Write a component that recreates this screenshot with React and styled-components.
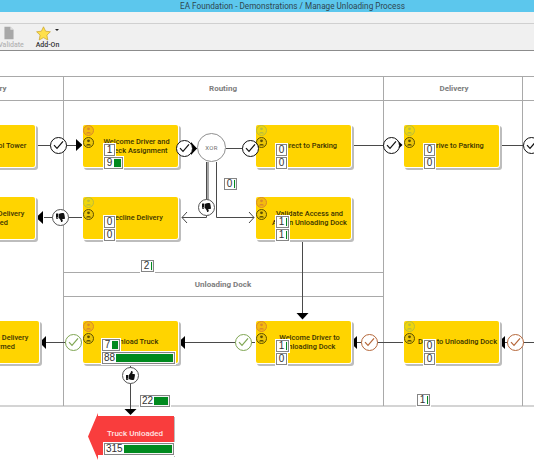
import styled, { createGlobalStyle } from "styled-components";
import { FaThumbsDown, FaThumbsUp } from "react-icons/fa";

const GlobalStyle = createGlobalStyle`
  html, body {
    margin: 0;
    padding: 0;
    background: #fff;
  }
  body {
    font-family: Roboto, "Liberation Sans", sans-serif;
    overflow: hidden;
  }
`;

const Page = styled.div`
  width: 534px;
  height: 462px;
  display: flex;
  flex-direction: column;
  overflow: hidden;
  background: #fff;
`;

const TitleBar = styled.div`
  height: 12px;
  flex: none;
  display: flex;
  align-items: center;
  padding-left: 180px;
  background: #5cc7ed;
  color: #2f4650;
  font-size: 8.2px;
  line-height: 12px;
  white-space: nowrap;
`;

const MenuBand = styled.div`
  height: 11px;
  flex: none;
  background: #f2f2f2;
  border-bottom: 1px solid #d0d0d0;
`;

const Toolbar = styled.div`
  height: 24px;
  flex: none;
  display: flex;
  gap: 14px;
  padding-top: 2px;
  background: #f0f0f0;
  border-bottom: 1px solid #8c8c8c;
`;

const ToolButton = styled.div`
  width: ${(p) => p.$width}px;
  display: flex;
  flex-direction: column;
  align-items: center;
  font-size: 7px;
  font-weight: 500;
  line-height: 9px;
  color: ${(p) => (p.$disabled ? "#b5b5b5" : "#333")};
  white-space: nowrap;
`;

const ToolIcon = styled.div`
  height: 15px;
  align-self: flex-start;
  margin-left: ${(p) => p.$offset}px;
  position: relative;
  display: flex;
`;

const Caret = styled.span`
  position: absolute;
  left: 19px;
  top: 3px;
  width: 0;
  height: 0;
  border-left: 2px solid transparent;
  border-right: 2px solid transparent;
  border-top: 2px solid #222;
`;

const Canvas = styled.div`
  position: relative;
  flex: 1;
  overflow: hidden;
`;

const Wires = styled.svg`
  position: absolute;
  left: 0;
  top: -51px;
`;

const LaneTitle = styled.div`
  position: absolute;
  left: ${(p) => p.$x - 60}px;
  top: ${(p) => p.$y - 51 - 6}px;
  width: 120px;
  text-align: center;
  font-size: 8px;
  line-height: 12px;
  font-weight: 700;
  color: #7d7d7d;
`;

const Task = styled.div`
  position: absolute;
  left: ${(p) => p.$x}px;
  top: ${(p) => p.$y - 51}px;
  width: 95px;
  height: 42px;
  box-sizing: border-box;
  padding-left: 12px;
  display: flex;
  align-items: center;
  justify-content: center;
  text-align: center;
  white-space: pre-line;
  background: #ffd400;
  border-radius: 2px;
  box-shadow: 0 0 0 1px #fff, 2px 2px 0 1px #bdbdbd;
  color: #3b3300;
  font-size: 7.4px;
  font-weight: 500;
  line-height: 9.5px;
`;

const Badge = styled.span`
  position: absolute;
  left: 0;
  top: ${(p) => p.$top}px;
  width: 11px;
  height: 11px;
  box-sizing: border-box;
  border-radius: 50%;
  display: flex;
  align-items: center;
  justify-content: center;
  background: ${(p) => p.$bg};
  border: 1px solid ${(p) => p.$line};
  color: ${(p) => p.$line};
`;

const CounterStack = styled.div`
  position: absolute;
  left: ${(p) => p.$left}px;
  top: ${(p) => p.$top}px;
  display: flex;
  flex-direction: column;
  align-items: flex-start;
  gap: 1px;
`;

const FreeCounter = styled.div`
  position: absolute;
  left: ${(p) => p.$x}px;
  top: ${(p) => p.$y - 51}px;
`;

const CounterRow = styled.div`
  display: flex;
  height: 10px;
  box-shadow: 0 0 0 1px #fff;
  background: #f4f4f4;
  border: 1px solid #858585;
  box-sizing: content-box;
`;

const CounterValue = styled.span`
  min-width: 9px;
  padding: 0 1px;
  box-sizing: border-box;
  text-align: center;
  background: #fff;
  color: #333;
  font-family: "Liberation Sans", sans-serif;
  font-size: 10px;
  font-weight: 400;
  line-height: 10px;
`;

const CounterBar = styled.span`
  display: block;
  width: ${(p) => p.$fill}px;
  height: 8px;
  margin: 1px 1px 1px 0;
  background: #008a1e;
`;

const Gate = styled.div`
  position: absolute;
  left: ${(p) => p.$x - 8.5}px;
  top: ${(p) => p.$y - 51 - 8.5}px;
  width: 17px;
  height: 17px;
  box-sizing: border-box;
  border-radius: 50%;
  background: #fff;
  border: ${(p) => (p.$thin ? 1 : 1.5)}px solid ${(p) => p.$color};
  color: ${(p) => (p.$tint ? p.$color : "#111")};
  display: flex;
  align-items: center;
  justify-content: center;
`;

const Xor = styled.div`
  position: absolute;
  left: 197px;
  top: 82px;
  width: 29px;
  height: 29px;
  box-sizing: border-box;
  border-radius: 50%;
  border: 1px solid #8f8f8f;
  background: #fff;
  display: flex;
  align-items: center;
  justify-content: center;
  color: #6f6f6f;
  font-size: 6px;
  letter-spacing: 0.3px;
`;

const EndEvent = styled.div`
  position: absolute;
  left: 88px;
  top: 362px;
  width: 86px;
  height: 47px;
  display: flex;
  justify-content: center;
  padding-left: 8px;
  box-sizing: border-box;
  background: #f93d3d;
  clip-path: polygon(0 50%, 10px 0, 10px 3px, 86px 3px, 86px 42px, 10px 42px, 10px 47px);
  color: #ffe3e3;
  font-size: 8px;
  font-weight: 500;
  line-height: 12px;
  padding-top: 15px;
`;

const EndShadow = styled.div`
  position: absolute;
  left: 174px;
  top: 366px;
  width: 1px;
  height: 40px;
  background: #bdbdbd;
`;

const Check = () => (
  <svg width="11" height="10" viewBox="0 0 11 10" fill="none">
    <path d="M1 5.2 L4 8.4 L10 1.4" stroke="currentColor" strokeWidth="1.2" />
  </svg>
);

const Person = () => (
  <svg width="7" height="7" viewBox="0 0 7 7" fill="currentColor">
    <circle cx="3.5" cy="1.8" r="1.4" />
    <path d="M1 6.5 C1 4.4 6 4.4 6 6.5 Z" />
  </svg>
);

const Counter = ({ value, fill = 0 }) => (
  <CounterRow>
    <CounterValue>{value}</CounterValue>
    {fill > 0 && <CounterBar $fill={fill} />}
  </CounterRow>
);

const DIM = { bg: "#efd60c", line: "#bcbc3c" };
const WARM = { bg: "#f4bb0c", line: "#d98a2c" };
const DARK = { bg: "#ecc608", line: "#5e5000" };

const tasks = [
  { x: -60, y: 125, text: "Go to Control Tower" },
  {
    x: 83,
    y: 125,
    text: "Welcome Driver and\nCheck Assignment",
    badges: [WARM, DARK],
    top: 19,
    left: 21,
    rows: [{ value: 1 }, { value: 9, fill: 7 }],
  },
  {
    x: 256,
    y: 125,
    text: "Direct to Parking",
    badges: [DIM, DARK],
    top: 19,
    left: 20,
    rows: [{ value: 0 }, { value: 0 }],
  },
  {
    x: 404,
    y: 125,
    text: "Drive to Parking",
    badges: [DIM, DARK],
    top: 19,
    left: 20,
    rows: [{ value: 0 }, { value: 0 }],
  },
  { x: -60, y: 197, text: "Announce Delivery\nDeclined" },
  {
    x: 83,
    y: 197,
    text: "Decline Delivery",
    badges: [DIM, DARK],
    top: 19,
    left: 21,
    rows: [{ value: 0 }, { value: 0 }],
  },
  {
    x: 256,
    y: 197,
    text: "Validate Access and\nAdd in Unloading Dock",
    badges: [WARM, DARK],
    top: 19,
    left: 20,
    rows: [
      { value: 1, fill: 1 },
      { value: 1, fill: 1 },
    ],
  },
  { x: -56, y: 321, text: "Announce Delivery\nConfirmed" },
  {
    x: 83,
    y: 321,
    text: "Unload Truck",
    badges: [WARM, DARK],
    top: 18,
    left: 19,
    rows: [
      { value: 7, fill: 6 },
      { value: 88, fill: 57 },
    ],
  },
  {
    x: 256,
    y: 321,
    text: "Welcome Driver to\nUnloading Dock",
    badges: [WARM, DARK],
    top: 19,
    left: 20,
    rows: [{ value: 1, fill: 1 }, { value: 0 }],
  },
  {
    x: 404,
    y: 321,
    text: "Drive to Unloading Dock",
    badges: [DIM, DARK],
    top: 19,
    left: 20,
    rows: [{ value: 0 }, { value: 0 }],
  },
];

const checks = [
  { x: 58, y: 145, color: "#111" },
  { x: 184, y: 148, color: "#111" },
  { x: 250, y: 148, color: "#111" },
  { x: 391, y: 145, color: "#111" },
  { x: 531, y: 145, color: "#111" },
  { x: 73, y: 342, color: "#7fa653", thin: true },
  { x: 243, y: 342, color: "#7fa653", thin: true },
  { x: 369, y: 342, color: "#b5673a", thin: true },
  { x: 515, y: 342, color: "#b5673a", thin: true },
];

const freeCounters = [
  { x: 224, y: 178, value: 0, fill: 1 },
  { x: 141, y: 260, value: 2, fill: 1 },
  { x: 140, y: 395, value: 22, fill: 14 },
  { x: 417, y: 394, value: 1, fill: 1 },
];

const App = () => (
  <Page>
    <GlobalStyle />
    <TitleBar>EA Foundation - Demonstrations / Manage Unloading Process</TitleBar>
    <MenuBand />
    <Toolbar>
      <ToolButton $width={22} $disabled>
        <ToolIcon $offset={4}>
          <svg width="10" height="14" viewBox="0 0 11 15">
            <path d="M0.5 0.5 H7 L10.5 4 V14.5 H0.5 Z" fill="#a8a8a8" />
            <path d="M7 0.5 V4 H10.5 Z" fill="#e0e0e0" />
          </svg>
        </ToolIcon>
        Validate
      </ToolButton>
      <ToolButton $width={23}>
        <ToolIcon $offset={0}>
          <svg width="15" height="15" viewBox="0 0 15 15">
            <path
              d="M7.5 0.8 L9.6 5.2 L14.4 5.8 L10.9 9.1 L11.8 14 L7.5 11.6 L3.2 14 L4.1 9.1 L0.6 5.8 L5.4 5.2 Z"
              fill="#ffe04a"
              stroke="#c9a227"
              strokeWidth="0.7"
            />
          </svg>
          <Caret />
        </ToolIcon>
        Add-On
      </ToolButton>
    </Toolbar>
    <Canvas>
      <Wires width="534" height="462" viewBox="0 0 534 462" fill="none">
        <g stroke="#a9a9a9" strokeWidth="1">
          <path d="M0 76.5 H534 M0 100.5 H534 M0 406 H534" />
          <path d="M63.5 76 V406 M383.5 76 V406 M522.5 76 V406" />
          <path d="M63 272.5 H383 M63 296.5 H383" />
        </g>
        <g stroke="#4a4a4a" strokeWidth="1">
          <path d="M36 145.5 H76 M178 148.5 H197 M226 148.5 H256 M352 145.5 H396 M499 145.5 H534" />
          <path d="M83 217.5 H44" />
          <path d="M206.5 162 V217.5 H182 M208 162 V216" />
          <path d="M216.5 162 V217.5 H254" />
          <path d="M187 212 L182 217.5 L187 223 M249 212 L254 217.5 L249 223" />
          <path d="M302.5 239 V314" />
          <path d="M534 342.5 H505 M404 342.5 H357 M256 342.5 H185 M83 342.5 H46" />
          <path d="M130.5 362 V410" />
        </g>
        <g fill="#000">
          <path d="M76 139 L82.5 145 L76 151 Z" />
          <path d="M191 142 L197 148.5 L191 155 Z" />
          <path d="M396 139 L402.5 145 L396 151 Z" />
          <path d="M43 211 L36 217.5 L43 224 Z" />
          <path d="M296.5 313 H308.5 L302.5 319.5 Z" />
          <path d="M505 336 L498 342.5 L505 349 Z" />
          <path d="M357 336 L350 342.5 L357 349 Z" />
          <path d="M185 336 L178 342.5 L185 349 Z" />
          <path d="M46 336 L39.5 342.5 L46 349 Z" />
          <path d="M124.5 409 H136.5 L130.5 415 Z" />
        </g>
      </Wires>

      <LaneTitle $x={-8} $y={89}>Delivery</LaneTitle>
      <LaneTitle $x={223} $y={89}>Routing</LaneTitle>
      <LaneTitle $x={454} $y={89}>Delivery</LaneTitle>
      <LaneTitle $x={223} $y={285}>Unloading Dock</LaneTitle>

      {tasks.map((t) => (
        <Task key={t.text} $x={t.x} $y={t.y}>
          {t.text}
          {t.badges &&
            t.badges.map((b, i) => (
              <Badge key={i} $top={i === 0 ? 0 : 12} $bg={b.bg} $line={b.line}>
                <Person />
              </Badge>
            ))}
          {t.rows && (
            <CounterStack $left={t.left} $top={t.top}>
              {t.rows.map((r, i) => (
                <Counter key={i} value={r.value} fill={r.fill} />
              ))}
            </CounterStack>
          )}
        </Task>
      ))}

      <Xor>XOR</Xor>

      {checks.map((c) => (
        <Gate key={c.x + "-" + c.y} $x={c.x} $y={c.y} $color={c.color} $thin={c.thin} $tint>
          <Check />
        </Gate>
      ))}

      <Gate $x={60} $y={217} $color="#555" $thin>
        <FaThumbsDown size={9} />
      </Gate>
      <Gate $x={206} $y={207} $color="#555" $thin>
        <FaThumbsDown size={9} />
      </Gate>
      <Gate $x={130.5} $y={375} $color="#555" $thin>
        <FaThumbsUp size={9} />
      </Gate>

      {freeCounters.map((c) => (
        <FreeCounter key={c.x} $x={c.x} $y={c.y}>
          <Counter value={c.value} fill={c.fill} />
        </FreeCounter>
      ))}

      <EndShadow />
      <EndEvent>Truck Unloaded</EndEvent>
      <CounterStack $left={104} $top={392}>
        <Counter value={315} fill={48} />
      </CounterStack>
    </Canvas>
  </Page>
);

export default App;
